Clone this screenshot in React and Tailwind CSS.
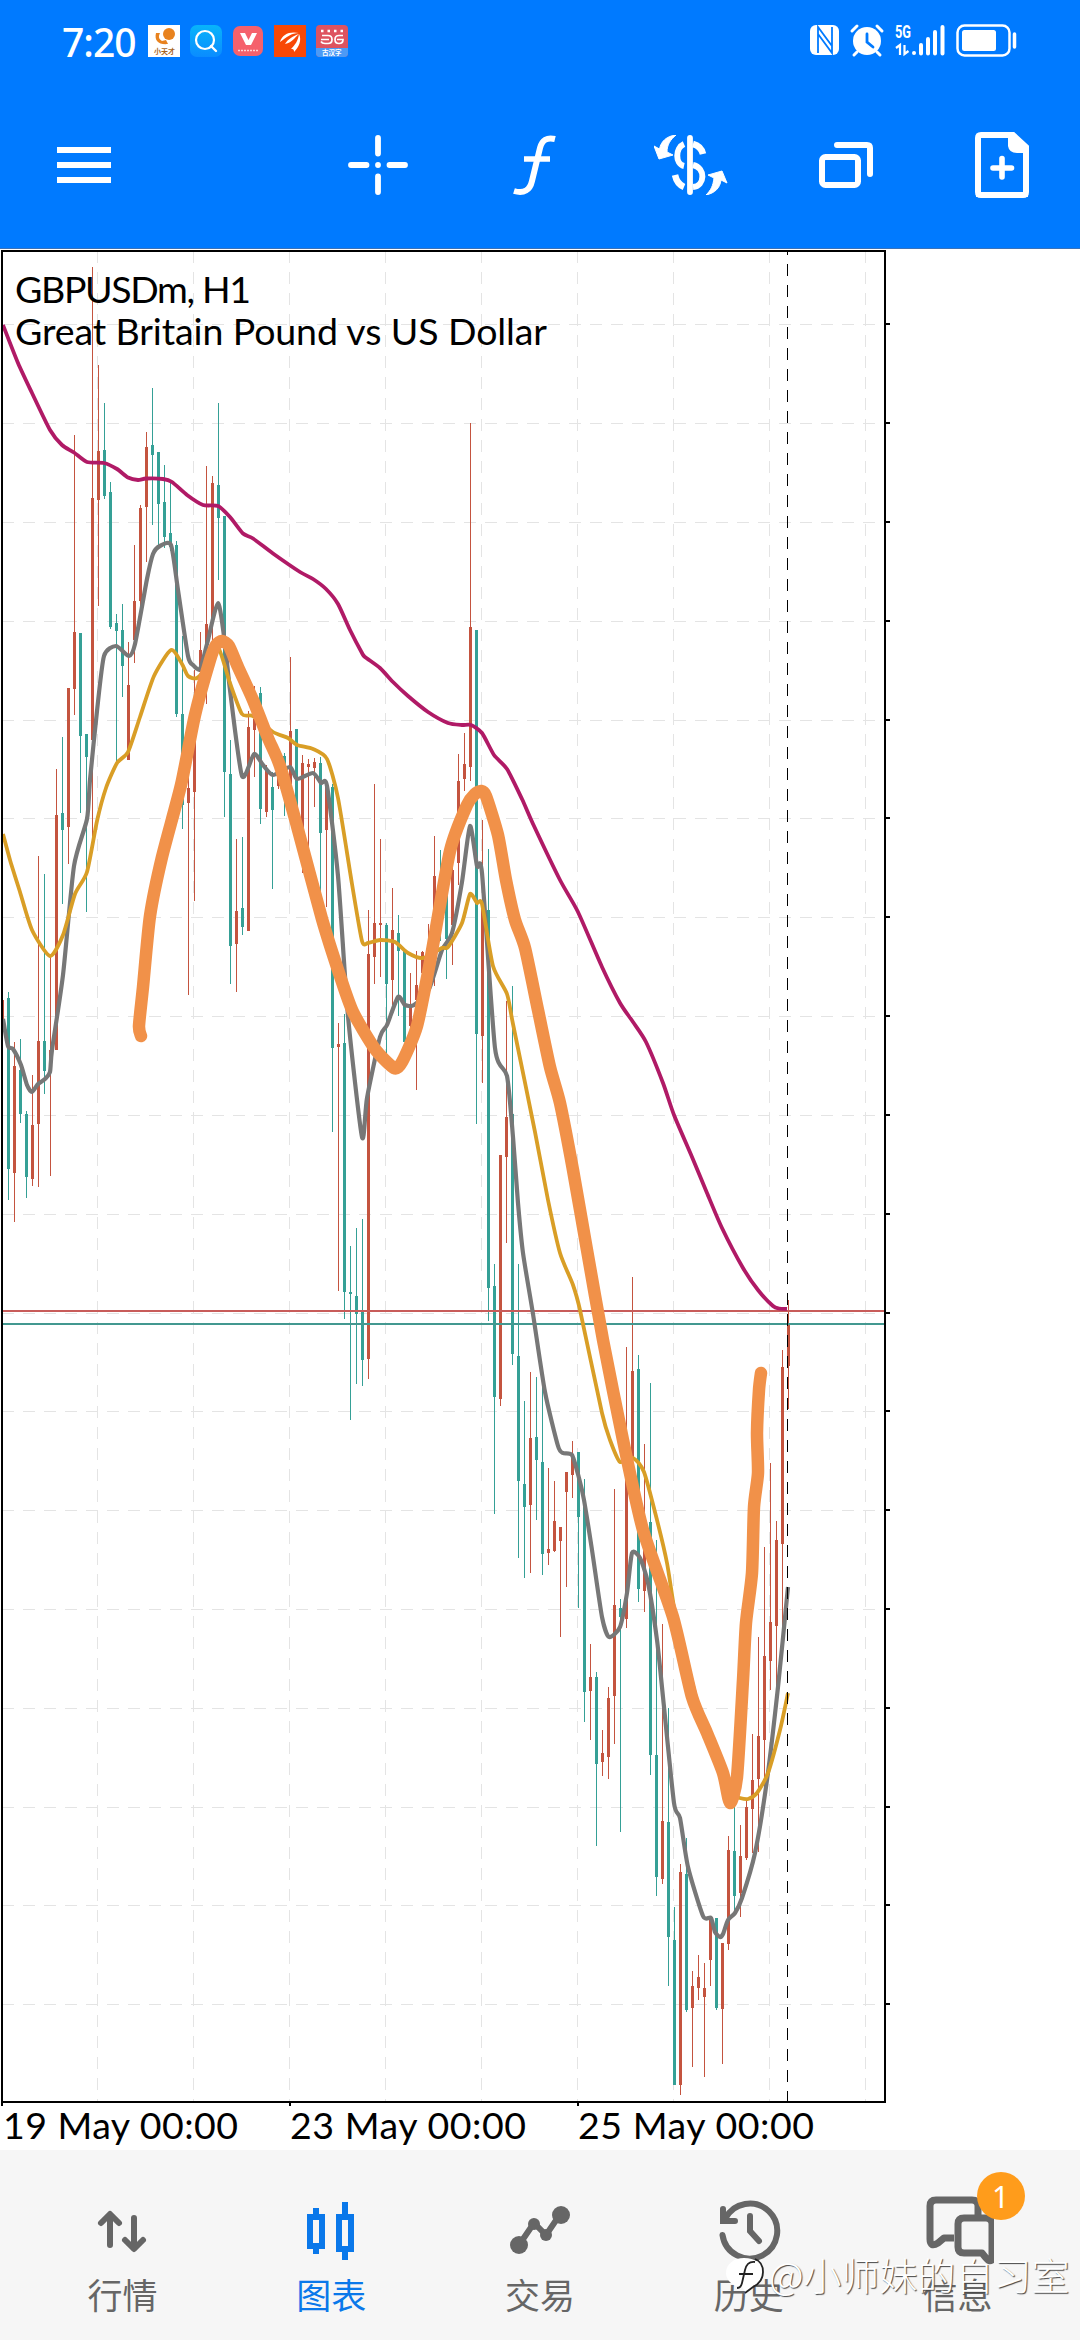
import { useId } from "react";

const RED = "#c4543f";
const TEAL = "#35a096";

// direction, high, low, body top, body bottom; one candle every 6px
const candles = [
  ["d", 992, 1200, 998, 1169], ["u", 1042, 1222, 1066, 1173], ["d", 1039, 1123, 1070, 1114], ["d", 1111, 1198, 1114, 1177],
  ["u", 1075, 1186, 1125, 1179], ["u", 856, 1187, 1041, 1124], ["d", 874, 1094, 1041, 1071], ["u", 955, 1176, 1050, 1072],
  ["u", 769, 1050, 815, 1050], ["d", 737, 904, 813, 830], ["u", 688, 864, 688, 827], ["u", 435, 715, 632, 689],
  ["d", 633, 813, 633, 736], ["d", 734, 912, 734, 757], ["u", 267, 837, 498, 740], ["u", 365, 606, 451, 500],
  ["d", 403, 499, 450, 496], ["d", 482, 629, 492, 627], ["d", 614, 765, 623, 631], ["d", 604, 697, 630, 666],
  ["u", 642, 760, 685, 760], ["u", 545, 663, 601, 640], ["u", 505, 611, 508, 601], ["u", 432, 562, 447, 507],
  ["d", 388, 525, 445, 455], ["d", 452, 547, 452, 504], ["d", 465, 548, 502, 537], ["d", 482, 551, 533, 547],
  ["d", 541, 717, 545, 714], ["d", 636, 829, 714, 805], ["u", 768, 995, 788, 803], ["u", 670, 901, 715, 792],
  ["u", 632, 680, 650, 672], ["u", 466, 704, 624, 652], ["u", 476, 640, 483, 620], ["d", 403, 580, 485, 518],
  ["d", 516, 817, 516, 772], ["d", 740, 984, 774, 946], ["u", 839, 992, 911, 944], ["d", 837, 935, 908, 927],
  ["u", 711, 931, 727, 931], ["u", 686, 777, 719, 730], ["d", 687, 824, 693, 809], ["u", 765, 817, 771, 812],
  ["d", 772, 889, 787, 810], ["u", 758, 789, 772, 786], ["d", 753, 816, 756, 765], ["u", 657, 794, 731, 784],
  ["d", 729, 812, 729, 808], ["u", 755, 873, 763, 830], ["u", 759, 848, 764, 767], ["u", 758, 807, 762, 768],
  ["d", 757, 900, 763, 833], ["u", 780, 907, 785, 830], ["d", 784, 1132, 787, 1048], ["u", 1023, 1291, 1044, 1047],
  ["d", 1014, 1319, 1043, 1292], ["d", 1246, 1420, 1292, 1294], ["d", 1228, 1384, 1296, 1314], ["d", 1219, 1386, 1311, 1360],
  ["u", 910, 1379, 954, 1359], ["u", 784, 984, 923, 957], ["u", 839, 977, 923, 925], ["d", 923, 1059, 925, 984],
  ["u", 888, 1005, 930, 980], ["d", 915, 1016, 933, 951], ["d", 950, 1042, 951, 1042], ["u", 973, 1033, 1005, 1026],
  ["u", 951, 1090, 985, 1000], ["u", 951, 985, 952, 973], ["u", 924, 989, 950, 975], ["u", 836, 986, 876, 925],
  ["d", 850, 941, 880, 925], ["d", 860, 979, 880, 939], ["u", 855, 965, 870, 925], ["u", 754, 885, 781, 863],
  ["u", 733, 791, 764, 779], ["u", 423, 781, 627, 767], ["d", 630, 1124, 630, 1034], ["u", 820, 1083, 903, 1036],
  ["d", 849, 1321, 910, 1288], ["d", 1264, 1514, 1286, 1397], ["u", 1155, 1406, 1155, 1399], ["u", 1001, 1243, 1117, 1157],
  ["d", 986, 1365, 1114, 1354], ["d", 1264, 1558, 1356, 1481], ["d", 1401, 1578, 1484, 1507], ["u", 1372, 1573, 1438, 1505],
  ["d", 1377, 1520, 1437, 1460], ["d", 1387, 1575, 1462, 1554], ["u", 1468, 1565, 1549, 1553], ["u", 1481, 1552, 1521, 1551],
  ["u", 1527, 1637, 1527, 1541], ["u", 1472, 1587, 1472, 1492], ["u", 1441, 1498, 1455, 1475], ["d", 1452, 1608, 1452, 1517],
  ["d", 1479, 1722, 1507, 1692], ["u", 1644, 1740, 1677, 1691], ["d", 1672, 1846, 1677, 1764], ["u", 1730, 1776, 1753, 1762],
  ["u", 1687, 1779, 1698, 1757], ["u", 1489, 1744, 1605, 1696], ["d", 1599, 1832, 1608, 1617], ["u", 1347, 1628, 1457, 1619],
  ["u", 1277, 1475, 1371, 1460], ["d", 1355, 1602, 1369, 1589], ["u", 1444, 1612, 1540, 1591], ["d", 1383, 1775, 1522, 1755],
  ["d", 1540, 1896, 1755, 1877], ["u", 1624, 1884, 1821, 1879], ["d", 1708, 1986, 1822, 1937], ["d", 1907, 2085, 1940, 2085],
  ["u", 1864, 2095, 1872, 2085], ["d", 1838, 2012, 1874, 2010], ["u", 1971, 2067, 1986, 2008], ["u", 1955, 2000, 1977, 1988],
  ["u", 1963, 2077, 1988, 1997], ["u", 1918, 1986, 1920, 1960], ["d", 1918, 2010, 1918, 2008], ["u", 1943, 2064, 1943, 2009],
  ["u", 1836, 1950, 1850, 1944], ["d", 1807, 1913, 1851, 1896], ["u", 1825, 1917, 1856, 1893], ["u", 1800, 1860, 1807, 1858],
  ["u", 1734, 1853, 1780, 1809], ["u", 1637, 1852, 1736, 1779], ["u", 1547, 1793, 1656, 1740], ["u", 1463, 1690, 1622, 1661],
  ["u", 1521, 1690, 1540, 1626], ["u", 1350, 1653, 1367, 1544], ["u", 1300, 1409, 1324, 1366],
];

const slowMa = [
  [3, 325], [18, 363], [32, 393], [50, 430], [62, 445], [74, 452.5], [87, 462], [104, 463], [117, 469], [128, 477.5],
  [138, 480], [146, 478.5], [163, 479], [172, 482], [187, 495], [203, 505], [218, 506], [230, 517], [243, 533.5],
  [253, 538.5], [273, 553.5], [300, 572], [313, 579], [326, 589], [338, 604], [350, 630], [362, 653], [365, 657],
  [380, 668], [393, 682], [408, 696], [428, 712], [448, 723], [462, 725], [471, 725], [482, 733], [494, 755], [507, 769],
  [522, 799], [534, 826], [560, 880], [578, 912], [602, 967], [620, 1003], [633, 1022], [646, 1042], [663, 1083],
  [674, 1115], [692, 1157], [707, 1193], [722, 1228], [743, 1268], [758, 1290], [773, 1306], [779, 1308.5], [787, 1309],
];

const midMa = [
  [3, 834], [10, 860], [20, 892], [32, 930], [50, 956], [63, 935], [75, 894], [87, 872], [97, 821], [106, 788],
  [117, 763], [128, 752], [140, 717], [154, 676], [171, 650], [182, 664], [188, 676], [197, 678], [208, 665], [218, 647],
  [230, 683], [242, 714], [253, 716], [273, 732], [288, 738], [297, 745], [313, 749], [327, 759], [338, 798], [352, 884],
  [362, 941], [368, 943], [380, 940], [395, 942], [408, 953], [423, 958], [442, 948], [448, 947], [462, 923], [470, 894],
  [477, 903], [482, 904], [493, 966], [507, 994], [513, 1024], [535, 1132], [548, 1200], [560, 1253], [573, 1285],
  [580, 1310], [602, 1413], [610, 1440], [620, 1462], [633, 1458], [644, 1472], [657, 1520], [667, 1563], [675, 1613],
  [684, 1650], [702, 1720], [718, 1770], [730, 1794], [740, 1798], [748, 1799], [757, 1793], [768, 1773], [780, 1730],
  [788, 1693],
];

const fastMa = [
  [3, 1019], [8, 1046], [13, 1049], [21, 1065], [27, 1085], [32, 1092], [38, 1084], [45, 1079], [50, 1072], [52, 1050],
  [63, 975], [74, 866], [87, 819], [90, 780], [97, 711], [104, 656], [116, 646], [129, 656], [135, 644], [147, 579],
  [153, 554], [160, 546], [171, 545], [178, 590], [188, 656], [193, 665], [200, 669], [207, 644], [218, 603], [225, 644],
  [230, 690], [242, 776], [254, 754], [263, 765], [273, 775], [290, 767], [297, 779], [313, 773], [321, 783], [327, 786],
  [338, 876], [348, 1016], [362, 1137], [367, 1098], [380, 1037], [387, 1025], [398, 997], [405, 1005], [414, 1005],
  [429, 989], [442, 950], [452, 933], [462, 882], [470, 826], [477, 866], [482, 873], [495, 1048], [507, 1076],
  [513, 1137], [518, 1203], [523, 1253], [533, 1314], [545, 1392], [558, 1446], [563, 1453], [572, 1455], [579, 1478],
  [584, 1500], [592, 1550], [602, 1617], [609, 1637], [620, 1627], [627, 1593], [632, 1553], [640, 1558], [648, 1583],
  [657, 1640], [663, 1697], [674, 1803], [680, 1818], [688, 1867], [703, 1916], [711, 1918], [715, 1932], [720, 1937],
  [723, 1934], [728, 1920], [735, 1913], [742, 1898], [755, 1853], [767, 1780], [778, 1687], [788, 1587],
];

const marker = [
  [141, 1036], [139, 1026], [143, 987], [150, 916], [162, 857], [181, 785], [195, 715], [210, 660], [216, 645],
  [222, 641], [229, 646], [238, 667], [253, 700], [268, 738], [280, 766], [297, 826], [322, 919], [340, 976], [353, 1012],
  [375, 1049], [394, 1068], [402, 1062], [417, 1026], [430, 962], [450, 851], [467, 805], [475, 794], [481, 791],
  [486, 796], [498, 835], [506, 880], [515, 920], [525, 948], [538, 1010], [550, 1067], [560, 1103], [573, 1170],
  [587, 1250], [603, 1340], [623, 1440], [643, 1530], [673, 1617], [692, 1697], [707, 1733], [723, 1773], [730, 1803],
  [737, 1777], [743, 1680], [746, 1623], [752, 1573], [754, 1507], [758, 1473], [757, 1433], [759, 1390], [761, 1373],
];

const gridX = [97, 193, 289, 385, 481, 577, 673, 769, 865];
const gridY = Array.from({ length: 18 }, (_, i) => Math.round(324.3 + i * 98.82));

const toPath = (points) =>
  points
    .map(([x, y], i) => {
      if (i === 0) return `M${x} ${y}`;
      const [px, py] = points[i - 1];
      const before = points[i - 2] || points[i - 1];
      const after = points[i + 1] || points[i];
      const k = 9;
      return `C${px + (x - before[0]) / k} ${py + (y - before[1]) / k} ${x - (after[0] - px) / k} ${y - (after[1] - py) / k} ${x} ${y}`;
    })
    .join("");

function StatusBar() {
  const blue = useId();
  return (
    <div className="flex h-[82px] items-center pl-[62px] text-white">
      <span className="w-[86px] font-['Noto_Sans'] text-[39px] leading-none font-medium tracking-[-1px]">7:20</span>
      <div className="flex gap-[10px]">
        <svg className="h-8 w-8" viewBox="0 0 32 32">
          <rect width="32" height="32" fill="#fff" />
          <circle cx="21" cy="9" r="6" fill="#e8821e" />
          <path d="M8 8c-2 8 3 12 12 11l-2-4-4 1c-3-2-4-4-2-8z" fill="#e8821e" />
          <text x="6" y="29" fontSize="7" fontWeight="700" fill="#a8641e" fontFamily="Noto Sans CJK SC">小天才</text>
        </svg>
        <svg className="h-8 w-8" viewBox="0 0 32 32">
          <defs>
            <linearGradient id={blue} x1="0" y1="0" x2="0" y2="1">
              <stop stopColor="#08b4fa" />
              <stop offset="1" stopColor="#0a8cff" />
            </linearGradient>
          </defs>
          <rect width="32" height="32" rx="7" fill={`url(#${blue})`} />
          <circle cx="15" cy="15" r="9" fill="none" stroke="#fff" strokeWidth="2.2" />
          <path d="M21 21l5 5" stroke="#fff" strokeWidth="2.4" strokeLinecap="round" />
        </svg>
        <svg className="h-8 w-8" viewBox="0 0 32 32">
          <rect x="1" y="1" width="30" height="30" rx="7" fill="#f5616c" />
          <path d="M8 8h5l3.500 7L20 8h5l-6 12h-5z" fill="#fff" />
          <path d="M6 25.500h20" stroke="#ffd4d4" strokeWidth="1.500" strokeDasharray="2 1" />
        </svg>
        <svg className="h-8 w-8" viewBox="0 0 32 32">
          <rect width="32" height="32" fill="#f84806" />
          <path d="M6 17C8 9 16 6 25 8c-8 0-12 4-19 9z" fill="#fff" />
          <path d="M11 19c3-5 8-8 14-10-5 4-6 8-14 10z" fill="#fff" />
          <path d="M17 24c4-4 7-8 8-15 3 6 0 13-5 18 0-3-1-3-3-3z" fill="#fff" />
        </svg>
        <svg className="h-8 w-8" viewBox="0 0 32 32">
          <rect width="32" height="32" rx="4" fill="#de5360" />
          <path d="M0 23h32v5a4 4 0 0 1-4 4H4a4 4 0 0 1-4-4z" fill="#4c9af6" />
          <path d="M5 6h22" stroke="#fff" strokeWidth="2.500" strokeDasharray="2.500 4" />
          <g fill="none" stroke="#fff" strokeWidth="1.700">
            <path d="M6 10.500h6q4 0 4 4t-4 4H9q-3 0-4-2M5 14.500h8" />
            <path d="M27 10.500h-4q-4 0-4 4t4 4q4 0 4-4h-6" />
          </g>
          <text x="6" y="30" fontSize="6.500" fontWeight="700" fill="#fff" fontFamily="Noto Sans CJK SC">古汉字</text>
        </svg>
      </div>
      <svg className="ml-[460px] h-9 w-[212px]" viewBox="808 23 212 36" fill="none">
        <rect x="810" y="25" width="29" height="30" rx="6" fill="#fff" />
        <path d="M818 53V27l14 19V33M832 27v26l-14-19v14" stroke="#007aff" strokeWidth="1.800" />
        <circle cx="867" cy="41" r="14" fill="#fff" />
        <path d="M852 31l5-5M882 31l-5-5M857 52l-3 3M877 52l3 3" stroke="#fff" strokeWidth="3" strokeLinecap="round" />
        <path d="M867 34v8l6 5" stroke="#007aff" strokeWidth="2.800" strokeLinecap="round" />
        <text x="895" y="38" fontSize="18" fontWeight="700" fill="#fff" fontFamily="Roboto" textLength="16" lengthAdjust="spacingAndGlyphs">5G</text>
        <path d="M896 48l4-3v10M904.500 45v9l4-3" stroke="#fff" strokeWidth="2.200" />
        <path d="M914 53h.01M921 45v8.500M928 39v14.500M935 32v21.500M942.500 27v26.500" stroke="#fff" strokeWidth="4" strokeLinecap="round" />
        <rect x="957.500" y="25.500" width="52" height="30" rx="7" stroke="#fff" strokeWidth="2.500" />
        <rect x="962" y="30" width="34" height="21" rx="2.500" fill="#fff" />
        <path d="M1014.500 34v13" stroke="#fff" strokeWidth="3.500" strokeLinecap="round" />
      </svg>
    </div>
  );
}

function Toolbar() {
  return (
    <div className="flex h-[166px] items-center pl-[57px] text-white">
      <svg className="h-9 w-[54px]" viewBox="0 0 54 36" fill="#fff">
        <path d="M0 0h54v6H0zM0 15h54v6H0zM0 30h54v6H0z" />
      </svg>
      <svg className="ml-[237px] h-[60px] w-[60px]" viewBox="0 0 60 60" stroke="#fff" strokeWidth="5.800" strokeLinecap="round">
        <path d="M30 3v15.500M30 41.500V57M3 30h15.500M41.500 30H57M30 30h.01" />
      </svg>
      <svg className="ml-[105px] h-[60px] w-[44px]" viewBox="0 0 44 60" fill="none" stroke="#fff" strokeWidth="6">
        <path d="M42 4c-8-2-13 1-15 9l-8 33c-2 9-8 13-18 10" />
        <path d="M11 24h26" strokeWidth="5.500" />
      </svg>
      <svg className="ml-[97px] h-[60px] w-[74px]" viewBox="0 0 74 60" fill="none" stroke="#fff" strokeWidth="6">
        <path d="M36 3v54" strokeLinecap="round" strokeWidth="5.800" />
        <path d="M30 9c-9 4-9 20 0 22" />
        <path d="M39 9q8 2 10 10" strokeWidth="6.500" />
        <path d="M21 40q2 9 9 12" strokeWidth="6.500" />
        <path d="M39 30c13 3 12 21 0 22" />
        <path d="M22 0C13 1 7 6 5.500 14L0 11l5 13 14-4-6-3C13 10 16 5 22 0zM52 60c9-2 14-7 15-15l6 3-5-12-14 4 6 3c-1 8-3 12-8 17z" fill="#fff" stroke="#fff" strokeWidth="1" />
      </svg>
      <svg className="ml-[91px] h-[46px] w-[54px]" viewBox="0 0 54 46" fill="none" stroke="#fff" strokeWidth="6">
        <rect x="3" y="15" width="36" height="28" rx="3.500" />
        <path d="M18 3h30q3 0 3 3v26" strokeLinecap="round" />
      </svg>
      <svg className="ml-[102px] h-[66px] w-[54px]" viewBox="0 0 54 66" fill="none" stroke="#fff" strokeWidth="6">
        <path d="M10 3h28l13 12v45q0 3-3 3H6q-3 0-3-3V6q0-3 3-3z" />
        <path d="M33 3v11q1 7 9 7h11v-6L38 2z" fill="#fff" stroke="none" />
        <path d="M27 26.500v18.500M18 36h18.500" strokeWidth="5.600" strokeLinecap="round" />
        <path d="M3 56v7h7M51 56v7h-7" strokeWidth="4" />
      </svg>
    </div>
  );
}

function Chart() {
  return (
    <svg className="block h-[1902px] w-[1080px] bg-white" viewBox="0 248 1080 1902">
      <rect x="0" y="248" width="1080" height="1" fill="#3b72b8" />
      <g stroke="#e4e4e4" strokeWidth="1" strokeDasharray="12 9" shapeRendering="crispEdges">
        {gridX.map((x) => (
          <line key={x} x1={x + 0.5} x2={x + 0.5} y1="251" y2="2101" />
        ))}
        {gridY.map((y) => (
          <line key={y} x1="2" x2="885" y1={y + 0.5} y2={y + 0.5} />
        ))}
      </g>

      <g shapeRendering="crispEdges">
        {candles.map(([dir, high, low, top, bottom], i) => (
          <g key={i} fill={dir === "u" ? RED : TEAL}>
            <rect x={8 + i * 6} y={high} width="1" height={low - high} />
            <rect x={7 + i * 6} y={top} width="3" height={bottom - top} />
          </g>
        ))}
        <rect x="3" y="1000" width="1" height="28" fill={RED} />
        <rect x="3" y="1310" width="882" height="2" fill="#c85c5a" />
        <rect x="3" y="1323" width="882" height="2" fill="#439890" />
      </g>

      <g fill="none" strokeWidth="3.800" strokeLinejoin="round">
        <path d={toPath(fastMa)} stroke="#777" strokeWidth="4.200" />
        <path d={toPath(midMa)} stroke="#d99e26" />
        <path d={toPath(slowMa)} stroke="#b01a66" />
      </g>

      <g shapeRendering="crispEdges" stroke="#000">
        <line x1="787.500" x2="787.500" y1="251" y2="2101" strokeDasharray="12 9" strokeDashoffset="8" />
        <rect x="2" y="251" width="883" height="1851" fill="none" strokeWidth="2" />
        {gridY.map((y) => (
          <line key={y} x1="885" x2="890" y1={y} y2={y} strokeWidth="2" />
        ))}
        {[2, 290, 578].map((x) => (
          <line key={x} x1={x} x2={x} y1="2101" y2="2106" strokeWidth="2" />
        ))}
      </g>

      <path d={toPath(marker)} fill="none" stroke="#f19149" strokeWidth="12.500" strokeLinecap="round" strokeLinejoin="round" />

      <g fontFamily="Lato" fontSize="37.500" fill="#000">
        <text x="15" y="303" textLength="236">GBPUSDm, H1</text>
        <text x="15" y="345" textLength="532">Great Britain Pound vs US Dollar</text>
        <text x="3" y="2139" textLength="235">19 May 00:00</text>
        <text x="290" y="2139" textLength="236">23 May 00:00</text>
        <text x="578" y="2139" textLength="236">25 May 00:00</text>
      </g>
    </svg>
  );
}

const tabs = [
  {
    label: "行情",
    icon: (
      <svg className="h-[72px] w-[72px]" viewBox="0 0 72 72" fill="none" stroke="currentColor" strokeWidth="6" strokeLinecap="round" strokeLinejoin="round">
        <path d="M24 49V19M15 27l9-9 9 9M48 22v29M39 44l9 9 9-9" />
      </svg>
    ),
  },
  {
    label: "图表",
    active: true,
    icon: (
      <svg className="h-[72px] w-[72px]" viewBox="0 0 72 72" fill="none" stroke="currentColor" strokeWidth="6">
        <rect x="15" y="21" width="12" height="29" />
        <rect x="44" y="21" width="12" height="32" />
        <path d="M21 12v8M21 50v8M50 6v14M50 54v10" />
      </svg>
    ),
  },
  {
    label: "交易",
    icon: (
      <svg className="h-[72px] w-[72px]" viewBox="0 0 72 72" fill="currentColor" stroke="currentColor">
        <path d="M15 49l15-22 12 12 15-22" fill="none" strokeWidth="6" />
        <g stroke="none">
          <circle cx="15" cy="49" r="9" />
          <circle cx="30" cy="28" r="6" />
          <circle cx="42" cy="39" r="6" />
          <circle cx="57" cy="19" r="9" />
        </g>
      </svg>
    ),
  },
  {
    label: "历史",
    icon: (
      <svg className="h-[72px] w-[72px]" viewBox="0 0 72 72" fill="none" stroke="currentColor" strokeWidth="6" strokeLinecap="round">
        <path d="M9.500 39a27.500 27.500 0 1 0 2.500-16" />
        <path d="M10 13v12h12M37 20v15l9 10" />
      </svg>
    ),
  },
  {
    label: "信息",
    badge: 1,
    icon: (
      <svg className="h-[72px] w-[72px]" viewBox="0 0 72 72" fill="none" stroke="currentColor" strokeWidth="7" strokeLinejoin="round">
        <path d="M32 42H22l-6 5q-8 5-8-4V10q0-6 6-6h36q6 0 6 6v11" />
        <path d="M42 22h22q6 0 6 6v36q-3 2-6-2l-4-5H42q-6 0-6-6V28q0-6 6-6z" />
      </svg>
    ),
  },
];

function TabBar() {
  return (
    <nav className="relative flex h-[190px] bg-[#f6f6f6] px-[18px] font-['Noto_Sans_CJK_SC',sans-serif]">
      {tabs.map((tab) => (
        <div
          key={tab.label}
          className={`flex flex-1 flex-col items-center pt-[46px] ${tab.active ? "text-[#0a78ea]" : "text-[#666]"}`}
        >
          <div className="relative">
            {tab.icon}
            {tab.badge && (
              <span className="absolute top-[-24px] left-[55px] grid size-12 place-items-center rounded-full bg-[#ff9c1b] font-['Noto_Sans'] text-[30px] text-white">
                {tab.badge}
              </span>
            )}
          </div>
          <span className="mt-[6px] text-[35px] leading-[40px]">{tab.label}</span>
        </div>
      ))}
      <div className="absolute top-[101px] left-[725px] flex items-center whitespace-nowrap text-white">
        <svg className="h-10 w-[44px]" viewBox="0 0 44 40">
          <path d="M19 4C9 4 1 10 1 19c0 8 8 14 16 14l4 6 6-7c7-2 11-7 11-13C38 10 30 4 19 4z" fill="#fff" />
          <path d="M30 5q8 3 8 13t-10 15l-8 6M30 8q-8-1-10 8l-3 13q-1 5-5 5M14 20h14" fill="none" stroke="#222" strokeWidth="1.800" />
        </svg>
        <span className="text-[38px] leading-[46px] font-light [text-shadow:1px_1px_1px_#444]">@小师妹的自习室</span>
      </div>
    </nav>
  );
}

function App() {
  return (
    <main className="w-[1080px] overflow-hidden bg-white">
      <header className="h-[248px] bg-[#007aff]">
        <StatusBar />
        <Toolbar />
      </header>
      <Chart />
      <TabBar />
    </main>
  );
}

export default App;
